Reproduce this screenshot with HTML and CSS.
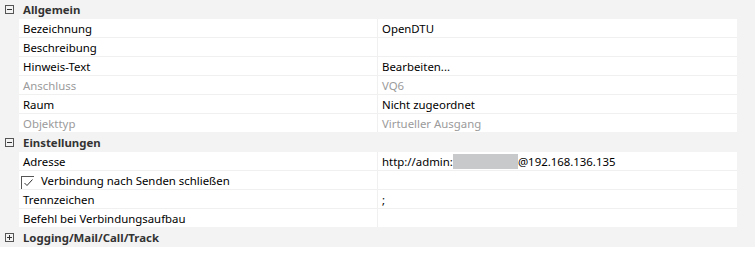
FILE: index.html
```html
<!DOCTYPE html>
<html lang="de">
<head>
<meta charset="utf-8">
<link rel="stylesheet" href="styles.css">
</head>
<body>
<div class="grid">
  <div class="section">
    <span class="toggle minus"></span><span class="title">Allgemein</span>
  </div>
  <div class="rows">
    <div class="row"><div class="label">Bezeichnung</div><div class="value">OpenDTU</div></div>
    <div class="row"><div class="label">Beschreibung</div><div class="value"></div></div>
    <div class="row"><div class="label">Hinweis-Text</div><div class="value">Bearbeiten...</div></div>
    <div class="row disabled"><div class="label">Anschluss</div><div class="value">VQ6</div></div>
    <div class="row"><div class="label">Raum</div><div class="value">Nicht zugeordnet</div></div>
    <div class="row disabled last"><div class="label">Objekttyp</div><div class="value">Virtueller Ausgang</div></div>
  </div>
  <div class="section">
    <span class="toggle minus"></span><span class="title">Einstellungen</span>
  </div>
  <div class="rows">
    <div class="row"><div class="label">Adresse</div><div class="value">http://admin:<span class="mask"></span>@192.168.136.135</div></div>
    <div class="row"><div class="label check-label"><span class="checkbox"><svg width="9" height="8" viewBox="0 0 9 8"><path d="M0.5 4 L3 6.5 L8.5 0.5" fill="none" stroke="#333" stroke-width="1"/></svg></span>Verbindung nach Senden schließen</div><div class="value"></div></div>
    <div class="row"><div class="label">Trennzeichen</div><div class="value">;</div></div>
    <div class="row last"><div class="label">Befehl bei Verbindungsaufbau</div><div class="value"></div></div>
  </div>
  <div class="section">
    <span class="toggle plus"></span><span class="title">Logging/Mail/Call/Track</span>
  </div>
</div>
<div class="bottom"></div>
</body>
</html>
```
FILE: styles.css
```css
html, body {
  margin: 0;
  padding: 0;
}
body {
  width: 755px;
  height: 255px;
  overflow: hidden;
  background: #f3f3f3;
  font-family: "Noto Sans", "Open Sans", sans-serif;
  font-size: 11.4px;
  color: #000;
}
.grid {
  width: 737px;
}
.section {
  height: 19px;
  display: flex;
  align-items: center;
  padding-left: 5px;
  box-sizing: border-box;
}
.toggle {
  position: relative;
  width: 9px;
  height: 9px;
  box-sizing: border-box;
  border: 1px solid #555;
  margin-right: 9px;
  flex: none;
}
.toggle::before {
  content: "";
  position: absolute;
  left: 1px;
  top: 3px;
  width: 5px;
  height: 1px;
  background: #333;
}
.plus::after {
  content: "";
  position: absolute;
  left: 3px;
  top: 1px;
  width: 1px;
  height: 5px;
  background: #333;
}
.title {
  font-weight: bold;
  color: #333;
}
.rows {
  margin-left: 19px;
}
.row {
  display: grid;
  grid-template-columns: 358px 1fr;
  height: 19px;
  box-sizing: border-box;
  background: #fff;
  border-bottom: 1px solid #f0f0f0;
}
.row.last {
  border-bottom-color: #f3f3f3;
}
.label, .value {
  display: flex;
  align-items: center;
  white-space: nowrap;
}
.label {
  padding-left: 4px;
}
.value {
  border-left: 1px solid #f0f0f0;
  padding-left: 4px;
}
.disabled {
  color: #9b9b9b;
}
.mask {
  display: inline-block;
  width: 65px;
  height: 15px;
  background: #c8c9cb;
}
.check-label {
  padding-left: 2px;
}
.checkbox {
  width: 13px;
  height: 13px;
  box-sizing: border-box;
  border-left: 1px solid #555;
  border-top: 1px solid #555;
  display: flex;
  align-items: center;
  justify-content: center;
  margin-right: 7px;
  margin-top: 4px;
}
.bottom {
  height: 8px;
  background: #fff;
}
```
